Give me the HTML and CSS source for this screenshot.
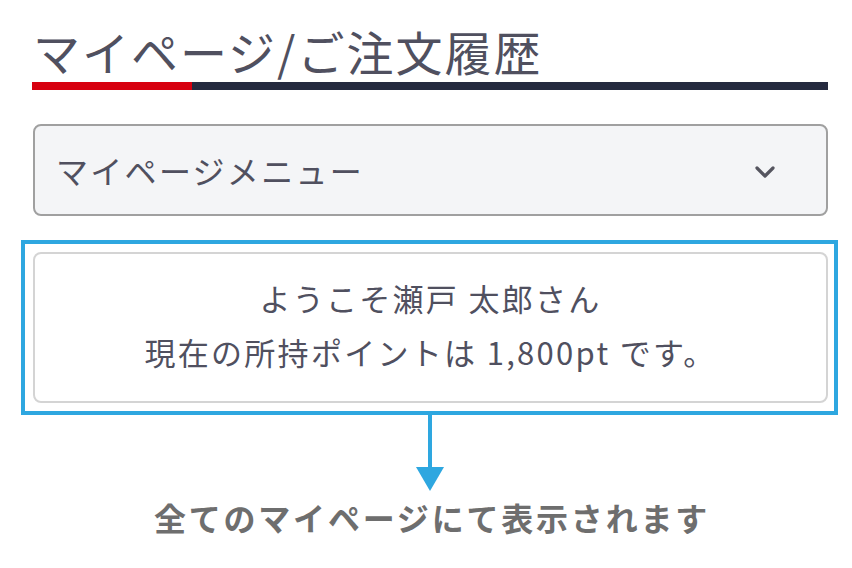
FILE: index.html
```html
<!DOCTYPE html>
<html lang="ja">
<head>
<meta charset="utf-8">
<link rel="stylesheet" href="styles.css">
</head>
<body>
<div class="page">
  <div class="heading">
    <h1 class="title">マイページ/ご注文履歴</h1>
    <div class="rule"><span class="rule-accent"></span><span class="rule-main"></span></div>
  </div>
  <div class="select">
    <span class="select-label">マイページメニュー</span>
    <svg class="chevron" width="22" height="14" viewBox="0 0 22 14"><path d="M3 3 L11 11 L19 3" fill="none" stroke="#55555f" stroke-width="3.2" stroke-linecap="round" stroke-linejoin="round"/></svg>
  </div>
  <div class="highlight">
    <div class="card">
      <p class="card-line">ようこそ瀬戸 太郎さん</p>
      <p class="card-line">現在の所持ポイントは 1,800pt です。</p>
    </div>
  </div>
  <div class="arrow">
    <span class="arrow-stem"></span>
    <span class="arrow-head"></span>
  </div>
  <p class="note">全てのマイページにて表示されます</p>
</div>
</body>
</html>
```
FILE: styles.css
```css
html, body {
  margin: 0;
  padding: 0;
  background: #ffffff;
}
body {
  font-family: "Noto Sans CJK JP", "Noto Sans", sans-serif;
  color: #50505f;
}
.page {
  width: 852px;
  height: 568px;
  overflow: hidden;
}
.heading {
  padding: 22px 24px 0 32px;
}
.title {
  margin: 0 0 2px;
  font-size: 47px;
  font-weight: 400;
  line-height: 58px;
  letter-spacing: 2px;
  color: #50505f;
  padding-left: 1px;
}
.rule {
  display: flex;
  height: 8px;
}
.rule-accent {
  width: 160px;
  background: #d7000f;
}
.rule-main {
  flex: 1;
  background: #252a3f;
}
.select {
  margin: 34px 24px 0 33px;
  height: 88px;
  border: 2px solid #a0a0a0;
  border-radius: 8px;
  background: #f4f5f7;
  display: flex;
  align-items: center;
  justify-content: space-between;
  padding: 0 50px 0 21px;
}
.select-label {
  font-size: 32px;
  letter-spacing: 2.3px;
  color: #50505f;
}
.chevron {
  display: block;
  margin-top: 4px;
}
.highlight {
  margin: 24px 14px 0 21px;
  border: 4px solid #2ea7e0;
  padding: 8px 6px 8px 8px;
}
.card {
  box-sizing: border-box;
  height: 151px;
  padding-bottom: 6px;
  border: 2px solid #d4d4d4;
  border-radius: 8px;
  display: flex;
  flex-direction: column;
  justify-content: center;
  align-items: center;
  gap: 10px;
}
.card-line {
  margin: 0;
  font-size: 31px;
  line-height: 44px;
  letter-spacing: 2.3px;
  color: #50505f;
}
.arrow {
  display: flex;
  flex-direction: column;
  align-items: center;
  width: 860px;
}
.arrow-stem {
  width: 4px;
  height: 52px;
  background: #2ea7e0;
}
.arrow-head {
  width: 0;
  height: 0;
  border-left: 14px solid transparent;
  border-right: 14px solid transparent;
  border-top: 24px solid #2ea7e0;
}
.note {
  margin: 2px 0 0;
  text-align: center;
  width: 864px;
  font-size: 32px;
  font-weight: 700;
  line-height: 48px;
  color: #6e6e6e;
  letter-spacing: 2.8px;
}
```
